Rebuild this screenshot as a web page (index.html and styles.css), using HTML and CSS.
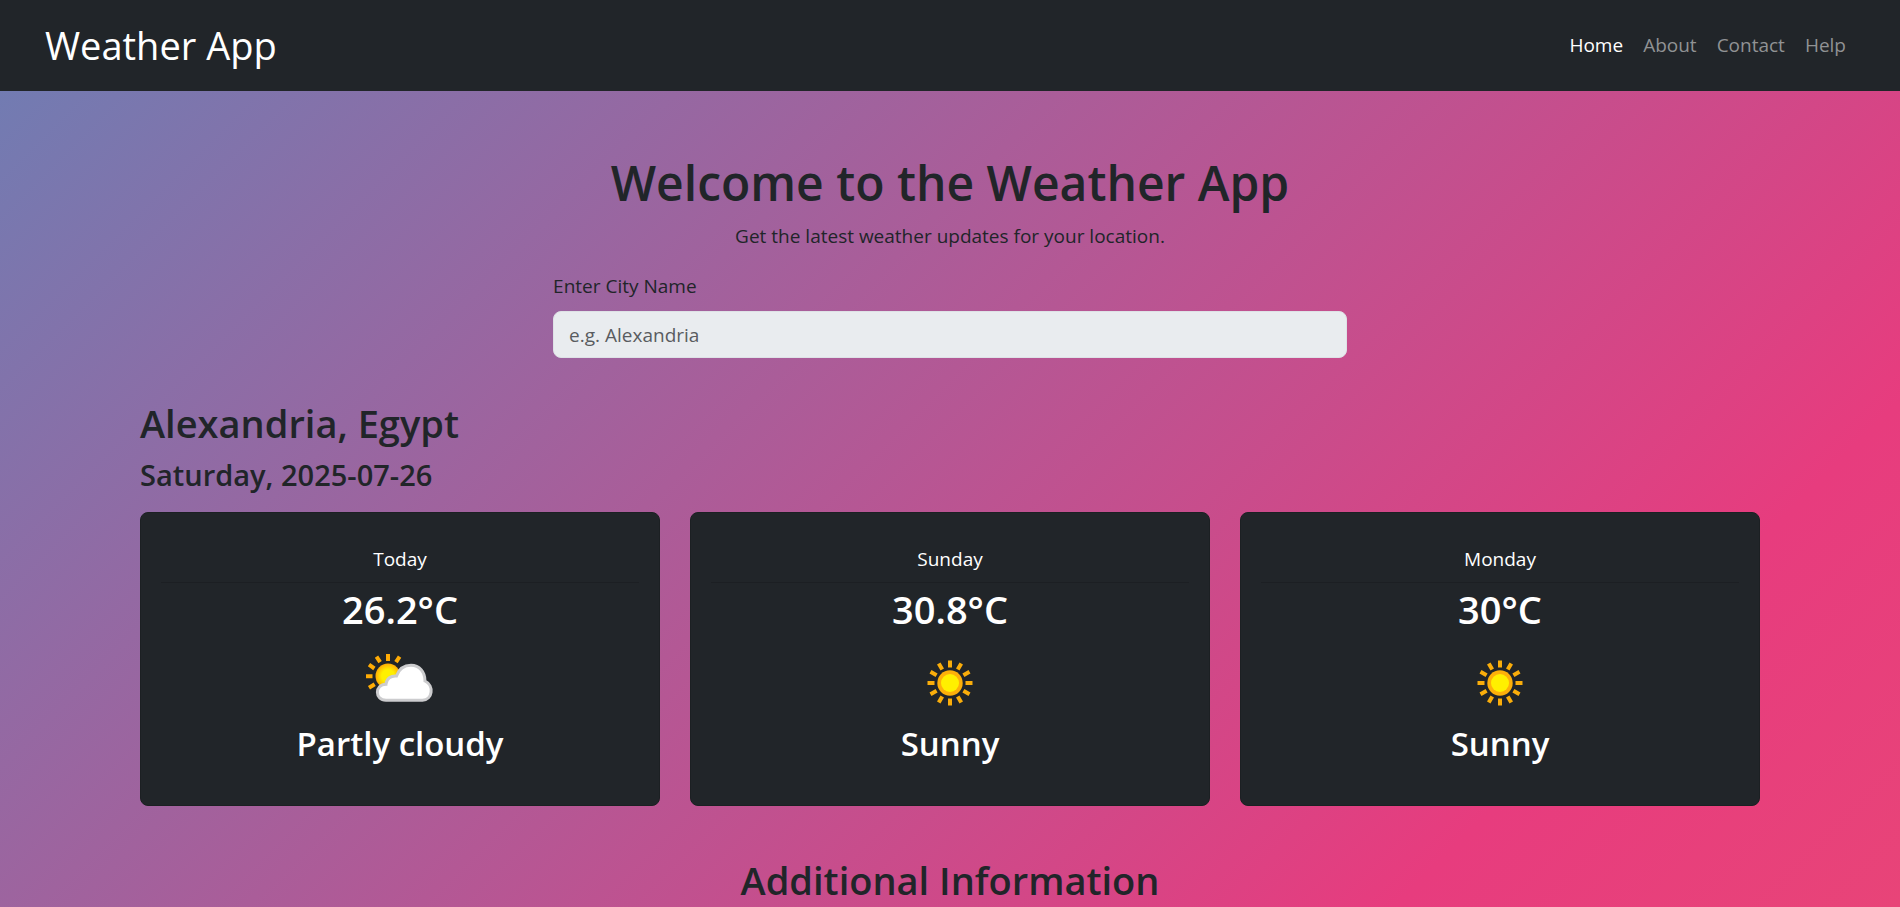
FILE: index.html
```html
<!DOCTYPE html>
<html lang="en">
<head>
  <meta charset="utf-8">
  <meta name="viewport" content="width=device-width, initial-scale=1">
  <title>Weather App</title>
  <link rel="stylesheet" href="styles.css">
</head>
<body>
  <svg width="0" height="0" class="sprite" aria-hidden="true">
    <symbol id="sunny" viewBox="0 0 80 80">
      <path stroke="#f9ad0b" stroke-width="4" d="M40 17.500v7M40 55.500v7M17.500 40h7M55.500 40h7M28.750 20.500l3.500 6.100M47.750 53.400l3.500 6.100M20.500 28.750l6.100 3.500M53.400 47.750l6.100 3.500M51.250 20.500l-3.500 6.100M32.250 53.400l-3.500 6.100M59.500 28.750l-6.100 3.500M26.600 47.750l-6.100 3.500"/>
      <circle cx="40" cy="40" r="12.700" fill="#fdb00a"/>
      <circle cx="40" cy="40" r="9" fill="#fff000"/>
    </symbol>
    <symbol id="partly-cloudy" viewBox="0 0 80 80">
      <defs>
        <radialGradient id="glow"><stop offset="0.500" stop-color="#fff000"/><stop offset="1" stop-color="#ffac05"/></radialGradient>
      </defs>
      <path stroke="#ffac05" stroke-width="4" d="M28 11v7M6 33.300h6.500M16.500 13.700l3.600 5.400M39.600 13.700l-3.600 5.400M9 21.700l5.400 3.800M9 44.700l5.700-3.400"/>
      <circle cx="28" cy="33" r="12.500" fill="url(#glow)"/>
      <path fill="#fff" stroke="#ccccce" stroke-width="3" d="M26 57.300C14.500 57 14.500 41.500 26 41.200C26.500 35.500 31 32.500 36.500 33C39 26 44.500 22.300 51 22.300C59.500 22.300 65 29 65 38C74.500 42.500 72.500 57 62.500 57.300Z"/>
    </symbol>
  </svg>

  <header class="navbar">
    <a class="brand" href="#">Weather App</a>
    <nav class="nav-links" aria-label="Main">
      <a class="nav-link active" href="#" aria-current="page">Home</a>
      <a class="nav-link" href="#">About</a>
      <a class="nav-link" href="#">Contact</a>
      <a class="nav-link" href="#">Help</a>
    </nav>
  </header>

  <main class="container">
    <section class="intro">
      <h1 class="title">Welcome to the Weather App</h1>
      <p class="lead">Get the latest weather updates for your location.</p>
      <form class="search">
        <label class="search-label" for="city">Enter City Name</label>
        <input class="search-input" id="city" type="text" placeholder="e.g. Alexandria">
      </form>
    </section>

    <section class="forecast">
      <h2 class="place">Alexandria, Egypt</h2>
      <h4 class="date">Saturday, 2025-07-26</h4>
      <div class="cards">
        <article class="card">
          <div class="card-header">Today</div>
          <h2 class="temp">26.2°C</h2>
          <svg class="icon" role="img" aria-label="Partly cloudy"><use href="#partly-cloudy"/></svg>
          <h3 class="condition">Partly cloudy</h3>
        </article>
        <article class="card">
          <div class="card-header">Sunday</div>
          <h2 class="temp">30.8°C</h2>
          <svg class="icon" role="img" aria-label="Sunny"><use href="#sunny"/></svg>
          <h3 class="condition">Sunny</h3>
        </article>
        <article class="card">
          <div class="card-header">Monday</div>
          <h2 class="temp">30°C</h2>
          <svg class="icon" role="img" aria-label="Sunny"><use href="#sunny"/></svg>
          <h3 class="condition">Sunny</h3>
        </article>
      </div>
    </section>

    <h2 class="section-title">Additional Information</h2>
  </main>
</body>
</html>
```

FILE: styles.css
```css
* {
  box-sizing: border-box;
}

body {
  margin: 0;
  min-height: 100vh;
  color: #212529;
  font-family: "Segoe UI", "Open Sans", "Noto Sans", sans-serif;
  font-size: 19px;
  line-height: 30px;
  background: linear-gradient(135deg, #6d7eb4 0%, #e73c7e 82%, #e84478 100%) fixed;
}

h1,
h2,
h3,
h4,
p {
  margin: 0;
  font-weight: 600;
}

.sprite {
  position: absolute;
}

.navbar {
  display: flex;
  align-items: center;
  justify-content: space-between;
  padding: 15px 45px;
  background: #212529;
}

.brand {
  color: #fff;
  font-size: 38px;
  line-height: 61px;
  text-decoration: none;
}

.nav-links {
  display: flex;
  gap: 20px;
  padding: 0 9px 2px 0;
}

.nav-link {
  color: #909294;
  text-decoration: none;
}

.nav-link.active {
  color: #fff;
}

.container {
  max-width: 1650px;
  margin: 0 auto;
  padding: 62px 15px 0;
}

.intro {
  display: flex;
  flex-direction: column;
  align-items: center;
}

.title {
  font-size: 48px;
  line-height: 60px;
  margin-bottom: 8px;
}

.lead {
  font-weight: 400;
  margin-bottom: 20px;
}

.search {
  display: flex;
  flex-direction: column;
  gap: 10px;
  width: 49%;
}

.search-input {
  width: 100%;
  height: 47px;
  padding: 0 15px;
  border: 1px solid #dee2e6;
  border-radius: 8px;
  background: #e9ecef;
  color: #212529;
  font: inherit;
}

.search-input::placeholder {
  color: #595c5f;
  opacity: 1;
}

.forecast {
  padding-top: 41px;
}

.place,
.temp,
.section-title {
  font-size: 38px;
  line-height: 48px;
}

.place {
  margin-bottom: 10px;
}

.date {
  font-size: 29px;
  line-height: 36px;
  margin-bottom: 19px;
}

.cards {
  display: grid;
  grid-template-columns: repeat(3, 1fr);
  gap: 30px;
}

.card {
  display: flex;
  flex-direction: column;
  align-items: center;
  padding: 20px 20px 40px;
  border: 1px solid #1c2023;
  border-radius: 8px;
  background: #212529;
  color: #fff;
}

.card-header {
  width: 100%;
  padding: 11px 0 8px;
  border-bottom: 1px solid #1c1f23;
  text-align: center;
}

.temp {
  margin: 2px 0 10px;
}

.icon {
  width: 80px;
  height: 80px;
}

.condition {
  font-size: 33px;
  line-height: 42px;
}

.section-title {
  margin-top: 50px;
  text-align: center;
}
```
